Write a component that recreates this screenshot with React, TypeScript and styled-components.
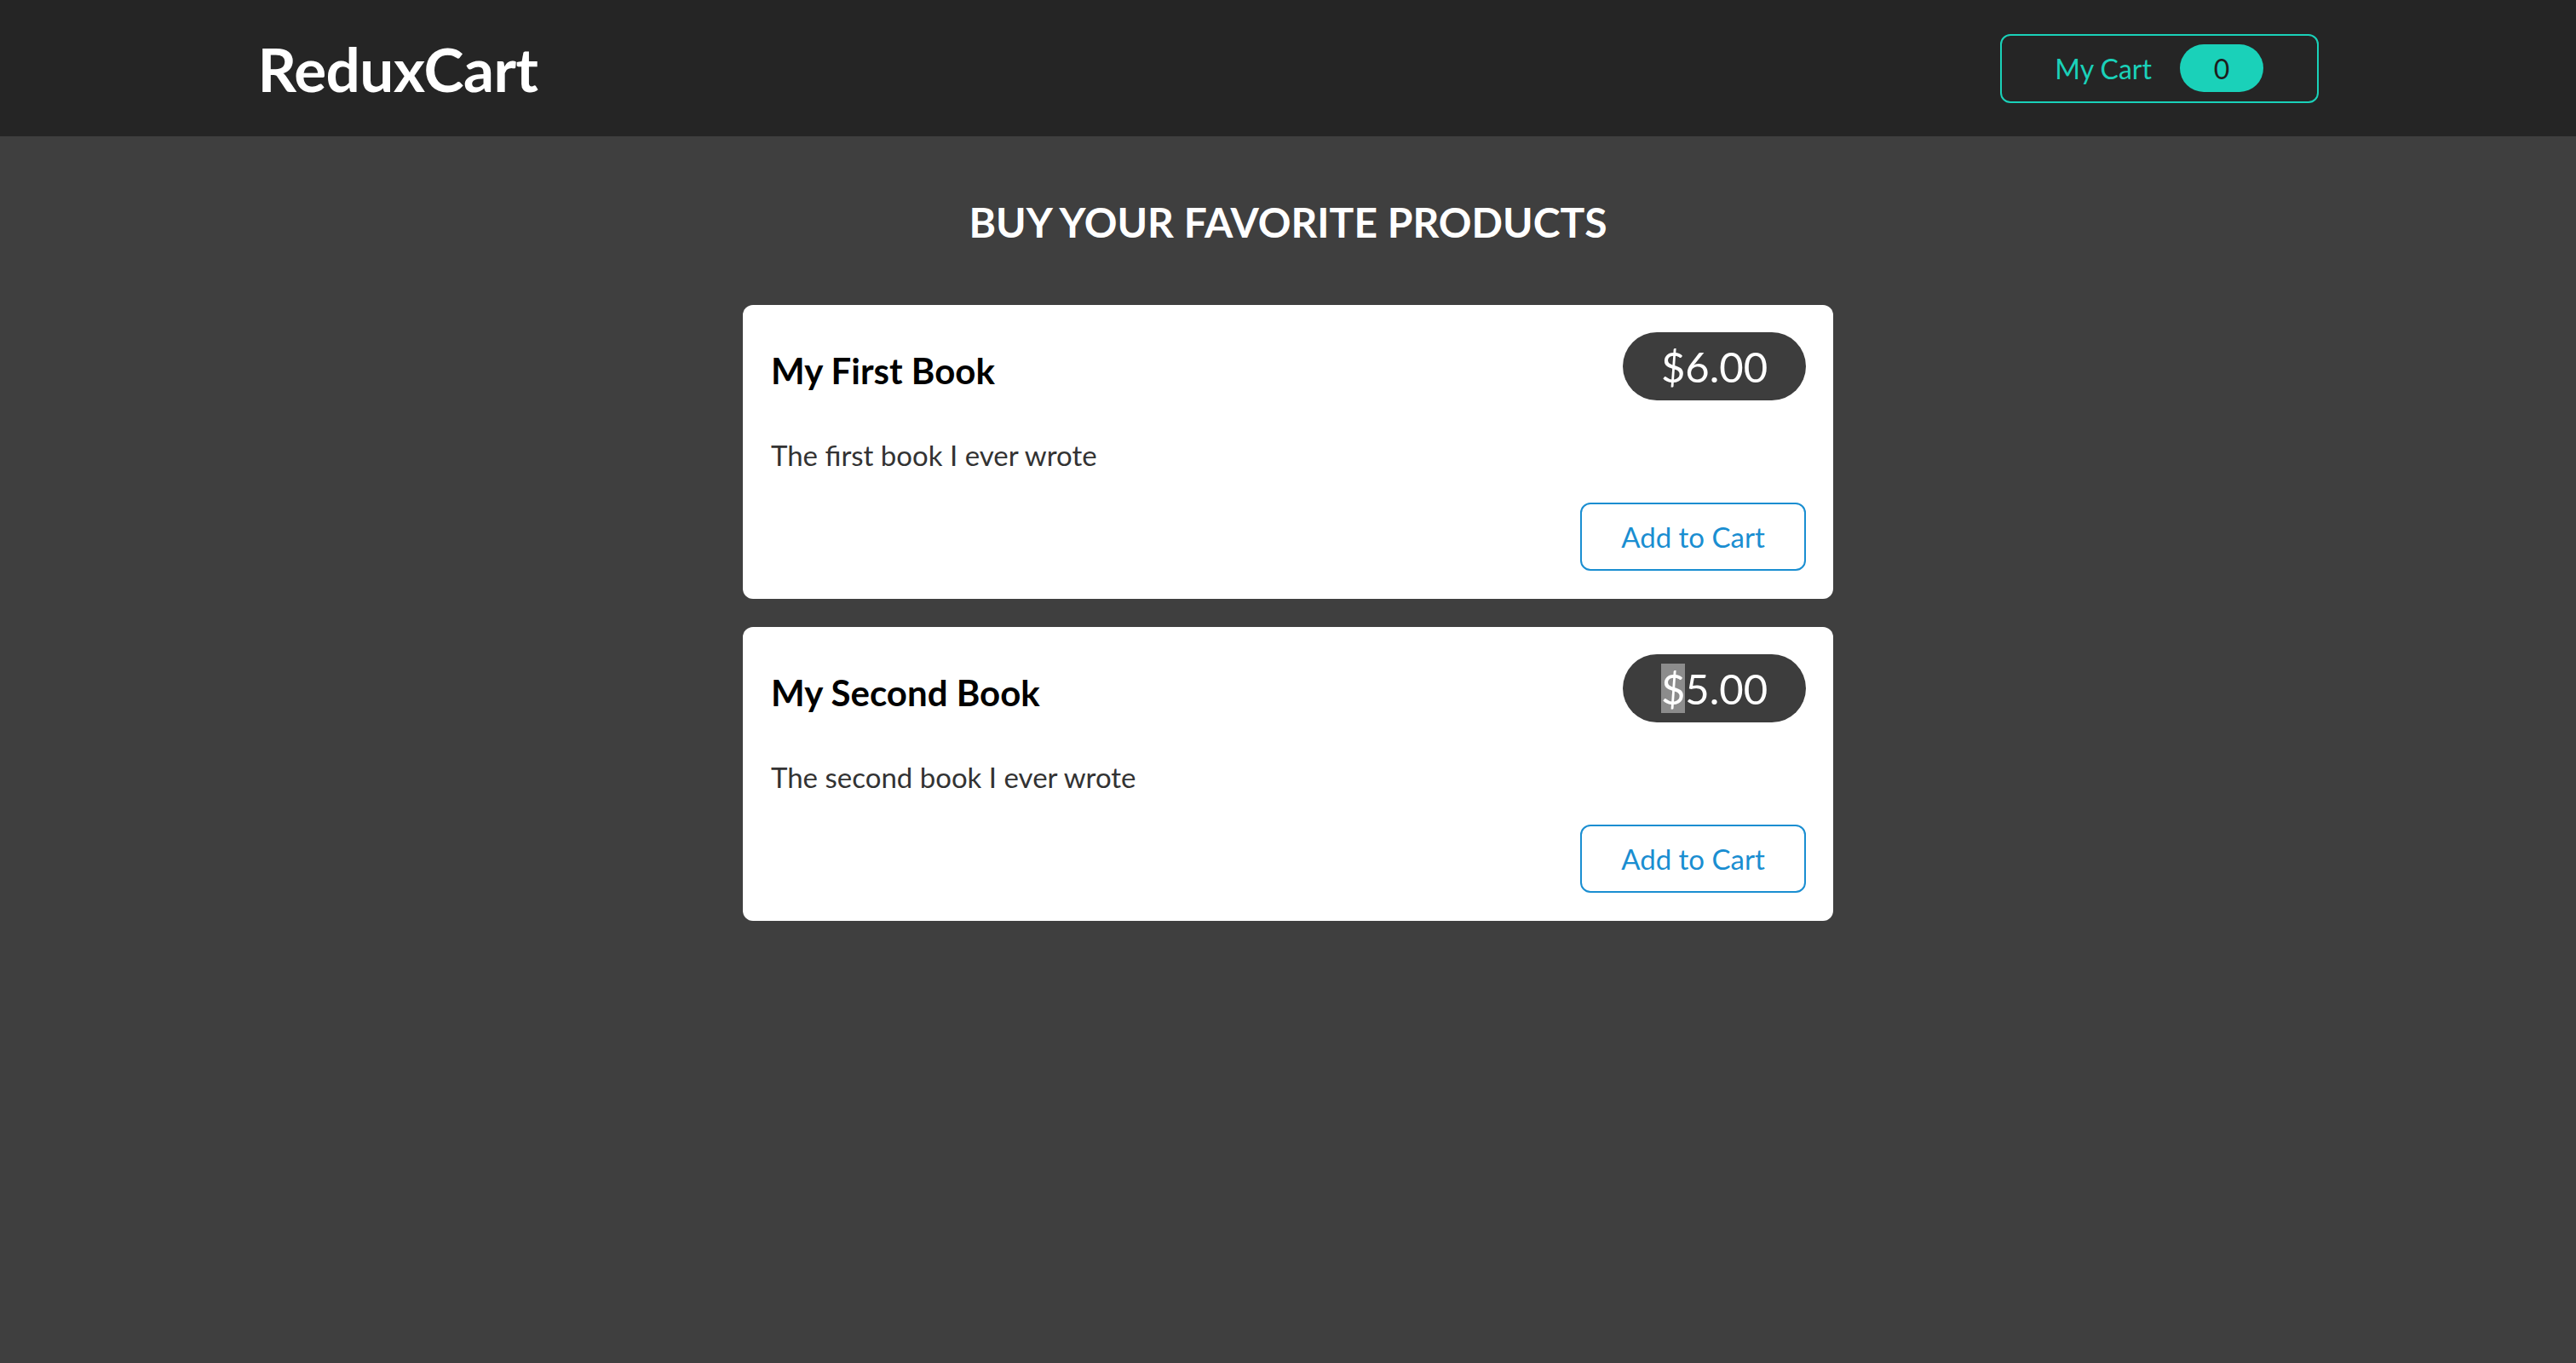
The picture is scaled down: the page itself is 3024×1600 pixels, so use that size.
import React from "react";
import styled, { createGlobalStyle } from "styled-components";

const Global = createGlobalStyle`
  * { box-sizing: border-box; }
  html, body { margin: 0; padding: 0; }
  body {
    background: #3f3f3f;
    font-family: Lato, "Open Sans", "Liberation Sans", sans-serif;
    min-height: 1600px;
  }
`;

const Header = styled.header`
  height: 160px;
  background: #252525;
  padding: 0 10%;
  display: flex;
  align-items: center;
  justify-content: space-between;
`;

const Logo = styled.h1`
  margin: 0;
  color: #ffffff;
  font-size: 71px;
  font-weight: 700;
  letter-spacing: -0.5px;
`;

const CartButton = styled.button`
  height: 81px;
  width: 374px;
  display: flex;
  align-items: center;
  justify-content: center;
  gap: 33px;
  background: transparent;
  border: 2px solid #1ad1b9;
  border-radius: 12px;
  color: #1ad1b9;
  font-family: inherit;
  font-size: 32px;
  cursor: pointer;
`;

const Badge = styled.span`
  width: 98px;
  height: 56px;
  border-radius: 28px;
  background: #1ad1b9;
  color: #1e1e1e;
  display: flex;
  align-items: center;
  justify-content: center;
  font-size: 32px;
`;

const Main = styled.main`
  padding-top: 71px;
  display: flex;
  flex-direction: column;
  align-items: center;
`;

const Title = styled.h2`
  margin: 0 0 67px;
  color: #ffffff;
  font-size: 48px;
  font-weight: 700;
  line-height: 60px;
  text-transform: uppercase;
`;

const List = styled.ul`
  list-style: none;
  margin: 0;
  padding: 0;
  width: 1280px;
  display: flex;
  flex-direction: column;
  gap: 33px;
`;

const Card = styled.li`
  background: #ffffff;
  border-radius: 12px;
  padding: 32px;
  height: 345px;
  display: flex;
  flex-direction: column;
`;

const CardHead = styled.div`
  display: flex;
  align-items: center;
  justify-content: space-between;
  height: 80px;
`;

const ItemTitle = styled.h3`
  margin: 10px 0 0 1px;
  font-size: 42px;
  font-weight: 700;
  color: #000000;
`;

const Price = styled.div`
  width: 215px;
  height: 80px;
  border-radius: 40px;
  background: #3d3d3d;
  color: #ffffff;
  font-size: 49px;
  display: flex;
  align-items: center;
  justify-content: center;
`;

const Selected = styled.span`
  background: #8c8c8c;
`;

const Desc = styled.p`
  margin: 40px 0 0 1px;
  font-size: 33px;
  line-height: 48px;
  color: #333333;
`;

const Actions = styled.div`
  margin-top: auto;
  display: flex;
  justify-content: flex-end;
`;

const AddButton = styled.button`
  width: 265px;
  height: 80px;
  margin-bottom: 1px;
  background: #ffffff;
  border: 2px solid #1a8ed1;
  border-radius: 12px;
  color: #1a8ed1;
  font-family: inherit;
  font-size: 33px;
  cursor: pointer;
`;

const products = [
  { id: 1, title: "My First Book", price: "6.00", desc: "The first book I ever wrote", selected: false },
  { id: 2, title: "My Second Book", price: "5.00", desc: "The second book I ever wrote", selected: true },
];

export default function App() {
  return (
    <>
      <Global />
      <Header>
        <Logo>ReduxCart</Logo>
        <CartButton>
          <span>My Cart</span>
          <Badge>0</Badge>
        </CartButton>
      </Header>
      <Main>
        <Title>Buy your favorite products</Title>
        <List>
          {products.map((p) => (
            <Card key={p.id}>
              <CardHead>
                <ItemTitle>{p.title}</ItemTitle>
                <Price>
                  {p.selected ? <Selected>$</Selected> : "$"}
                  {p.price}
                </Price>
              </CardHead>
              <Desc>{p.desc}</Desc>
              <Actions>
                <AddButton>Add to Cart</AddButton>
              </Actions>
            </Card>
          ))}
        </List>
      </Main>
    </>
  );
}
